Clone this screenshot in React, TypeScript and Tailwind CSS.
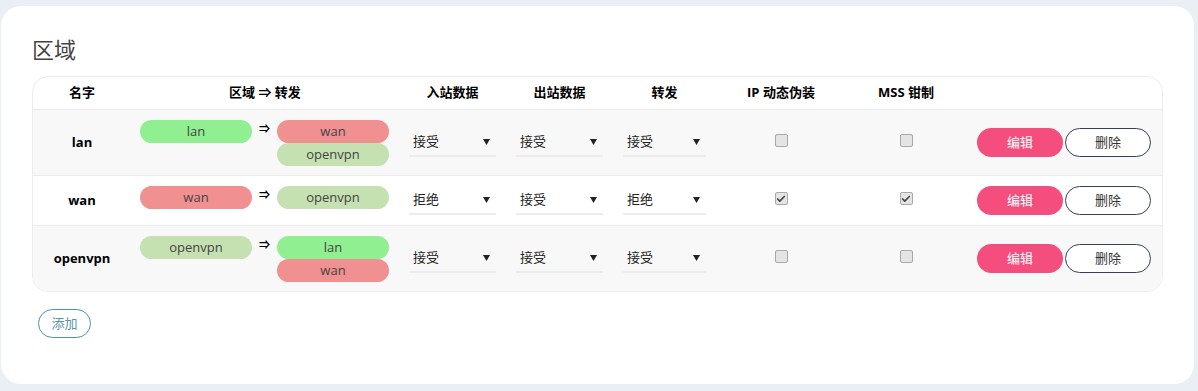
import { Check } from "lucide-react";

type Zone = "lan" | "wan" | "openvpn";
type Policy = "接受" | "拒绝";

interface ZoneRow {
  name: Zone;
  forwards: Zone[];
  input: Policy;
  output: Policy;
  forward: Policy;
  masq: boolean;
  mss: boolean;
  height: string;
  bg: string;
}

const ZONE_BG: Record<Zone, string> = {
  lan: "bg-[#90ef90]",
  wan: "bg-[#f09090]",
  openvpn: "bg-[#c5e1b1]",
};

const rows: ZoneRow[] = [
  { name: "lan", forwards: ["wan", "openvpn"], input: "接受", output: "接受", forward: "接受", masq: false, mss: false, height: "h-[66px]", bg: "bg-[#f8f8f8]" },
  { name: "wan", forwards: ["openvpn"], input: "拒绝", output: "接受", forward: "拒绝", masq: true, mss: true, height: "h-[50px]", bg: "bg-white" },
  { name: "openvpn", forwards: ["lan", "wan"], input: "接受", output: "接受", forward: "接受", masq: false, mss: false, height: "h-[66px]", bg: "bg-[#f8f8f8]" },
];

const COLS = "grid grid-cols-[98px_268px_107px_107px_103px_130px_120px_197px]";

function Pill({ zone }: { zone: Zone }) {
  return (
    <div className={`${ZONE_BG[zone]} w-[112px] h-[23px] rounded-full flex items-center justify-center text-[13px] text-[#444]`}>
      {zone}
    </div>
  );
}

function Select({ value, w }: { value: Policy; w: string }) {
  return (
    <div className={`${w} h-[29px] flex items-center justify-between pl-[4px] pr-[6px] border-b-2 border-[#ececec] text-[13px] text-[#222]`}>
      <span>{value}</span>
      <svg width="7" height="6" viewBox="0 0 7 6" className="mt-[1px]">
        <path d="M0 0h7L3.5 6z" fill="#222" />
      </svg>
    </div>
  );
}

function Checkbox({ checked }: { checked: boolean }) {
  return (
    <span className="mb-[4px] w-[13px] h-[13px] rounded-[2px] border border-[#a9a9a9] bg-[#e4e4e4] flex items-center justify-center">
      {checked && <Check size={10} strokeWidth={4} className="text-[#444]" />}
    </span>
  );
}

export default function App() {
  return (
    <div className="bg-[#eaeef5] w-[1198px] h-[391px] pt-[6px] pl-[1px] font-['Open_Sans','Noto_Sans_CJK_SC',sans-serif]">
      <div className="bg-white w-[1193px] h-[378px] rounded-[20px] pt-[27px] pl-[31px] pr-[31px]">
        <h2 className="text-[22px] leading-[33px] text-[#444] font-normal mb-[10px]">区域</h2>

        <div className="border border-[#ececec] rounded-[16px] overflow-hidden">
          <div className={`${COLS} h-[32px] items-center text-[13px] font-bold text-black`}>
            <div className="text-center">名字</div>
            <div className="text-center">区域 ⇒ 转发</div>
            <div className="text-center">入站数据</div>
            <div className="text-center">出站数据</div>
            <div className="text-center">转发</div>
            <div className="text-center">IP 动态伪装</div>
            <div className="text-center">MSS 钳制</div>
            <div />
          </div>

          {rows.map((r) => (
            <div key={r.name} className={`${COLS} ${r.height} ${r.bg} border-t border-[#ececec] items-center`}>
              <div className="text-center text-[13px] font-bold text-black">{r.name}</div>
              <div className="self-start pt-[10px] pl-[9px] flex items-start">
                <Pill zone={r.name} />
                <span className="w-[25px] text-center text-[11px] leading-[17px] font-bold text-black">⇒</span>
                <div className="flex flex-col">
                  {r.forwards.map((f) => (
                    <Pill key={f} zone={f} />
                  ))}
                </div>
              </div>
              <div className="pl-[10px]">
                <Select value={r.input} w="w-[87px]" />
              </div>
              <div className="pl-[10px]">
                <Select value={r.output} w="w-[87px]" />
              </div>
              <div className="pl-[10px]">
                <Select value={r.forward} w="w-[83px]" />
              </div>
              <div className="flex justify-center">
                <Checkbox checked={r.masq} />
              </div>
              <div className="flex justify-center">
                <Checkbox checked={r.mss} />
              </div>
              <div className="pl-[11px] flex gap-[2px]">
                <button className="w-[86px] h-[29px] rounded-full bg-[#f34e7d] text-white text-[13px]">编辑</button>
                <button className="w-[86px] h-[29px] rounded-full border border-[#34405a] bg-white text-[#333] text-[13px]">删除</button>
              </div>
            </div>
          ))}
        </div>

        <button className="mt-[17px] ml-[6px] w-[53px] h-[29px] rounded-full border border-[#4a93ad] text-[#5a93aa] text-[13px]">添加</button>
      </div>
    </div>
  );
}
